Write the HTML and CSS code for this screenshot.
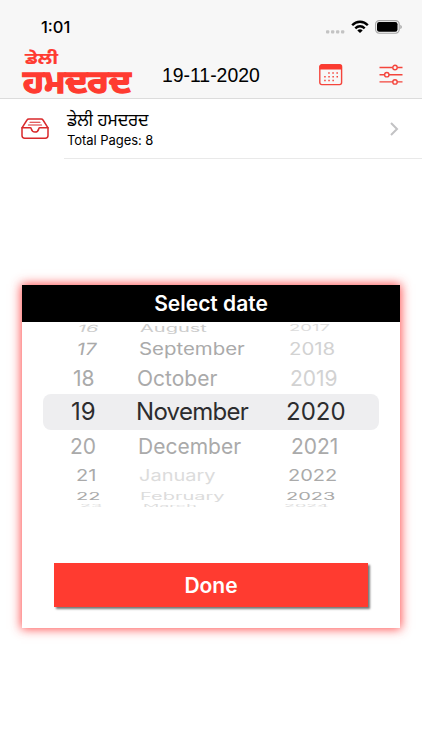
FILE: index.html
```html
<!DOCTYPE html>
<html lang="pa">
<head>
    <meta charset="UTF-8">
    <meta name="viewport" content="width=device-width, initial-scale=1.0">
    <title>ਡੇਲੀ ਹਮਦਰਦ</title>
    <link rel="stylesheet" href="styles.css">
</head>
<body>

    <header class="header">
        <div class="status-bar">
            <span class="time">1:01</span>
            <div class="status-icons">
                <svg class="dots" width="19" height="4" viewBox="0 0 19 4" fill="#c3c3c3">
                    <rect x="0" y="0.3" width="3.3" height="3.3" rx="1"/>
                    <rect x="5" y="0.3" width="3.3" height="3.3" rx="1"/>
                    <rect x="10" y="0.3" width="3.3" height="3.3" rx="1"/>
                    <rect x="15" y="0.3" width="3.3" height="3.3" rx="1"/>
                </svg>
                <svg class="wifi" width="18" height="14" viewBox="0 0 18 14" fill="none" stroke="#000" stroke-width="2.4">
                    <path d="M1.2 5.2C5.6 0.5 12.4 0.5 16.8 5.2"/>
                    <path d="M4.3 8.3C7 5.6 11 5.6 13.7 8.3"/>
                    <path d="M6.3 10.4C7.8 8.9 10.2 8.9 11.7 10.4L9 13.1Z" fill="#000" stroke="none"/>
                </svg>
                <svg class="battery" width="27" height="14" viewBox="0 0 27 14">
                    <rect x="0.6" y="0.6" width="23.6" height="12.6" rx="3.6" fill="none" stroke="#a5a5a5" stroke-width="1.1"/>
                    <rect x="2" y="2" width="20.5" height="9.8" rx="2.2"/>
                    <path d="M25.3 4.8C27.3 5.6 27.3 8.3 25.3 9.1Z" fill="#a5a5a5"/>
                </svg>
            </div>
        </div>
        <div class="nav-bar">
            <svg class="logo" width="112" height="50" viewBox="0 0 112 50">
                <text class="logo-small" x="4" y="15" textLength="33" lengthAdjust="spacingAndGlyphs">ਡੇਲੀ</text>
                <text class="logo-big" x="2" y="36.5" transform="scale(1 1.2)" textLength="108" lengthAdjust="spacingAndGlyphs">ਹਮਦਰਦ</text>
            </svg>
            <h1 class="date">19-11-2020</h1>
            <svg class="calendar" width="24" height="22" viewBox="0 0 24 22">
                <rect x="0.8" y="0.8" width="21.8" height="19.8" rx="2" fill="none" stroke="#f4453c" stroke-width="1.4"/>
                <path d="M0.6 5.4V2.6Q0.6 0.5 2.6 0.5H20.8Q22.8 0.5 22.8 2.6V5.4Z" fill="#fb3b30"/>
                <path d="M9.2 9H19.5M5.2 12.7H19.5M5.2 16.4H15.5" stroke="#f4453c" stroke-width="1.5" stroke-dasharray="1.5 2.6"/>
            </svg>
            <svg class="filter" width="24" height="22" viewBox="0 0 24 22" fill="#f7f7f7" stroke="#f4453c" stroke-width="1.4">
                <path d="M0.5 3.5H23.5M0.5 10.7H23.5M0.5 17.9H23.5"/>
                <circle cx="16" cy="3.5" r="2.2"/>
                <circle cx="7.8" cy="10.7" r="2.2"/>
                <circle cx="16" cy="17.9" r="2.2"/>
            </svg>
        </div>
    </header>

    <main>
        <div class="paper">
            <svg class="tray" width="28" height="22" viewBox="0 0 28 22" fill="none" stroke="#d9292b" stroke-width="1.5" stroke-linejoin="round" stroke-linecap="round">
                <path d="M1 9.8L6 2Q6.6 1 7.8 1H20.2Q21.4 1 22 2L27 9.8V17.5Q27 20.2 24.3 20.2H3.7Q1 20.2 1 17.5Z"/>
                <path d="M1 9.8H9.3Q10 9.8 10.2 10.7Q11 14 14 14Q17 14 17.8 10.7Q18 9.8 18.7 9.8H27"/>
                <path d="M9 4.2H19M7.4 7H20.6" stroke-width="1.1"/>
            </svg>
            <div class="paper-info">
                <div class="paper-name">ਡੇਲੀ ਹਮਦਰਦ</div>
                <div class="paper-pages">Total Pages: 8</div>
            </div>
            <svg class="chevron" width="9" height="14" viewBox="0 0 9 14" fill="none" stroke="#c2c2c4" stroke-width="2">
                <path d="M1 1L7 7L1 13"/>
            </svg>
        </div>

        <div class="dialog">
            <h2>Select date</h2>
            <div class="wheel">
                <div class="row row-up3"><span>16</span><span>August</span><span>2017</span></div>
                <div class="row row-up2"><span>17</span><span>September</span><span>2018</span></div>
                <div class="row row-up1"><span>18</span><span>October</span><span>2019</span></div>
                <div class="row selected"><span>19</span><span>November</span><span>2020</span></div>
                <div class="row row-down1"><span>20</span><span>December</span><span>2021</span></div>
                <div class="row row-down2"><span>21</span><span>January</span><span>2022</span></div>
                <div class="row row-down3"><span>22</span><span>February</span><span>2023</span></div>
                <div class="row row-down4"><span>23</span><span>March</span><span>2024</span></div>
            </div>
            <button class="done">Done</button>
        </div>
    </main>

</body>
</html>
```

FILE: styles.css
```css
* {
    margin: 0;
    padding: 0;
    box-sizing: border-box;
}

body {
    font-family: Inter, "Noto Sans Gurmukhi", "Noto Sans", sans-serif;
    background: #fff;
    color: #000;
    width: 422px;
    height: 750px;
    overflow: hidden;
}

.header {
    height: 99px;
    background: #f7f7f7;
    border-bottom: 1px solid #dcdcdc;
}

.status-bar {
    height: 49px;
    padding: 5px 20px 0 41px;
    display: flex;
    justify-content: space-between;
    align-items: center;
}

.time {
    font-size: 16.5px;
    font-weight: 500;
}

.status-icons {
    display: flex;
    align-items: center;
}

.dots {
    margin: 9px 6px 0 0;
}

.wifi {
    margin-right: 6px;
}

.nav-bar {
    display: flex;
    align-items: center;
    padding-left: 21px;
}

.logo {
    fill: #ff3b30;
    stroke: #ff3b30;
    font-weight: 700;
    overflow: visible;
}

.logo-small {
    font-size: 16px;
    stroke-width: 0.2px;
}

.logo-big {
    font-size: 27px;
    stroke-width: 1.2px;
}

.date {
    width: 98px;
    margin: 2px 0 0 29px;
    font-family: "Liberation Sans", sans-serif;
    font-size: 19.4px;
    font-weight: 400;
    white-space: nowrap;
}

.calendar {
    margin: 2px 0 0 59px;
}

.filter {
    margin: 2px 0 0 36px;
}

.paper {
    display: flex;
    height: 60px;
    padding-left: 21px;
}

.tray {
    margin-top: 19px;
}

.paper-info {
    flex: 1;
    margin-left: 15px;
    padding: 9px 0 0 3px;
    border-bottom: 1px solid #e9e9e9;
}

.paper-name {
    height: 24px;
    font-size: 17px;
    line-height: 24px;
    white-space: nowrap;
}

.paper-pages {
    font-size: 13px;
    line-height: 17px;
    letter-spacing: -0.05px;
}

.chevron {
    margin: 23px 23px 0 -32px;
}

.dialog {
    width: 378px;
    height: 343px;
    margin: 126px 0 0 22px;
    background: #fff;
    box-shadow: 0 0 10px 1px rgba(255, 45, 45, 0.85);
}

.dialog h2 {
    height: 37px;
    background: #000;
    color: #fff;
    font-size: 21px;
    font-weight: 600;
    line-height: 38px;
    text-align: center;
}

.wheel {
    height: 192px;
    padding: 0 21px;
    overflow: hidden;
}

.row {
    display: grid;
    align-items: center;
    align-content: center;
    color: #aaa;
    line-height: 1;
}

.row span {
    transform-origin: left center;
    white-space: nowrap;
}

.row-up3 {
    height: 11px;
    padding-left: 35px;
    grid-template-columns: 62px 149px 1fr;
    font-size: 20px;
    color: #ccc;
}

.row-up3 span {
    transform: scaleY(0.5);
}

.row-up3 span:first-child {
    transform: scaleY(0.5) skewX(-10deg);
}

.row-up3 span:last-child {
    font-size: 18.5px;
}

.row-up2 {
    height: 32px;
    padding-left: 34px;
    grid-template-columns: 62px 150px 1fr;
    font-size: 20.4px;
}

.row-up2 span {
    transform: scaleY(0.82);
}

.row-up2 span:first-child {
    transform: scaleY(0.82) skewX(-8deg);
}

.row-up1 {
    height: 29px;
    padding: 0 0 3px 30px;
    grid-template-columns: 64px 153px 1fr;
    font-size: 21px;
}

.selected {
    height: 36px;
    padding-left: 28px;
    grid-template-columns: 65px 150px 1fr;
    border-radius: 8px;
    background: #eeeef0;
    color: #2c2c2e;
    font-size: 24px;
}

.selected span:nth-child(2) {
    letter-spacing: -0.7px;
}

.row-down1 {
    height: 32px;
    padding-left: 27px;
    grid-template-columns: 68px 153px 1fr;
    font-size: 21px;
}

.row-down2 {
    height: 26px;
    padding-left: 33px;
    grid-template-columns: 63px 149px 1fr;
    font-size: 20px;
}

.row-down2 span {
    transform: scaleY(0.8);
}

.row-down3 {
    height: 15px;
    padding-left: 33px;
    grid-template-columns: 64px 146px 1fr;
    font-size: 20px;
}

.row-down3 span {
    transform: scaleY(0.5);
}

.row-down4 {
    height: 5px;
    padding-left: 37px;
    grid-template-columns: 63px 141px 1fr;
    font-size: 18px;
    color: #ddd;
}

.row-down4 span {
    transform: scaleY(0.2);
}

.row-up2 span:last-child,
.row-up1 span:last-child {
    color: #d2d2d2;
}

.row-up3 span:last-child,
.row-down2 span:nth-child(2),
.row-down3 span:nth-child(2) {
    color: #dcdcdc;
}

.done {
    display: block;
    width: 314px;
    height: 44px;
    margin: 49px 0 0 32px;
    border: none;
    background: #ff3b30;
    box-shadow: 2px 2px 2px #777;
    color: #fff;
    font-family: inherit;
    font-size: 21px;
    font-weight: 600;
}
```
